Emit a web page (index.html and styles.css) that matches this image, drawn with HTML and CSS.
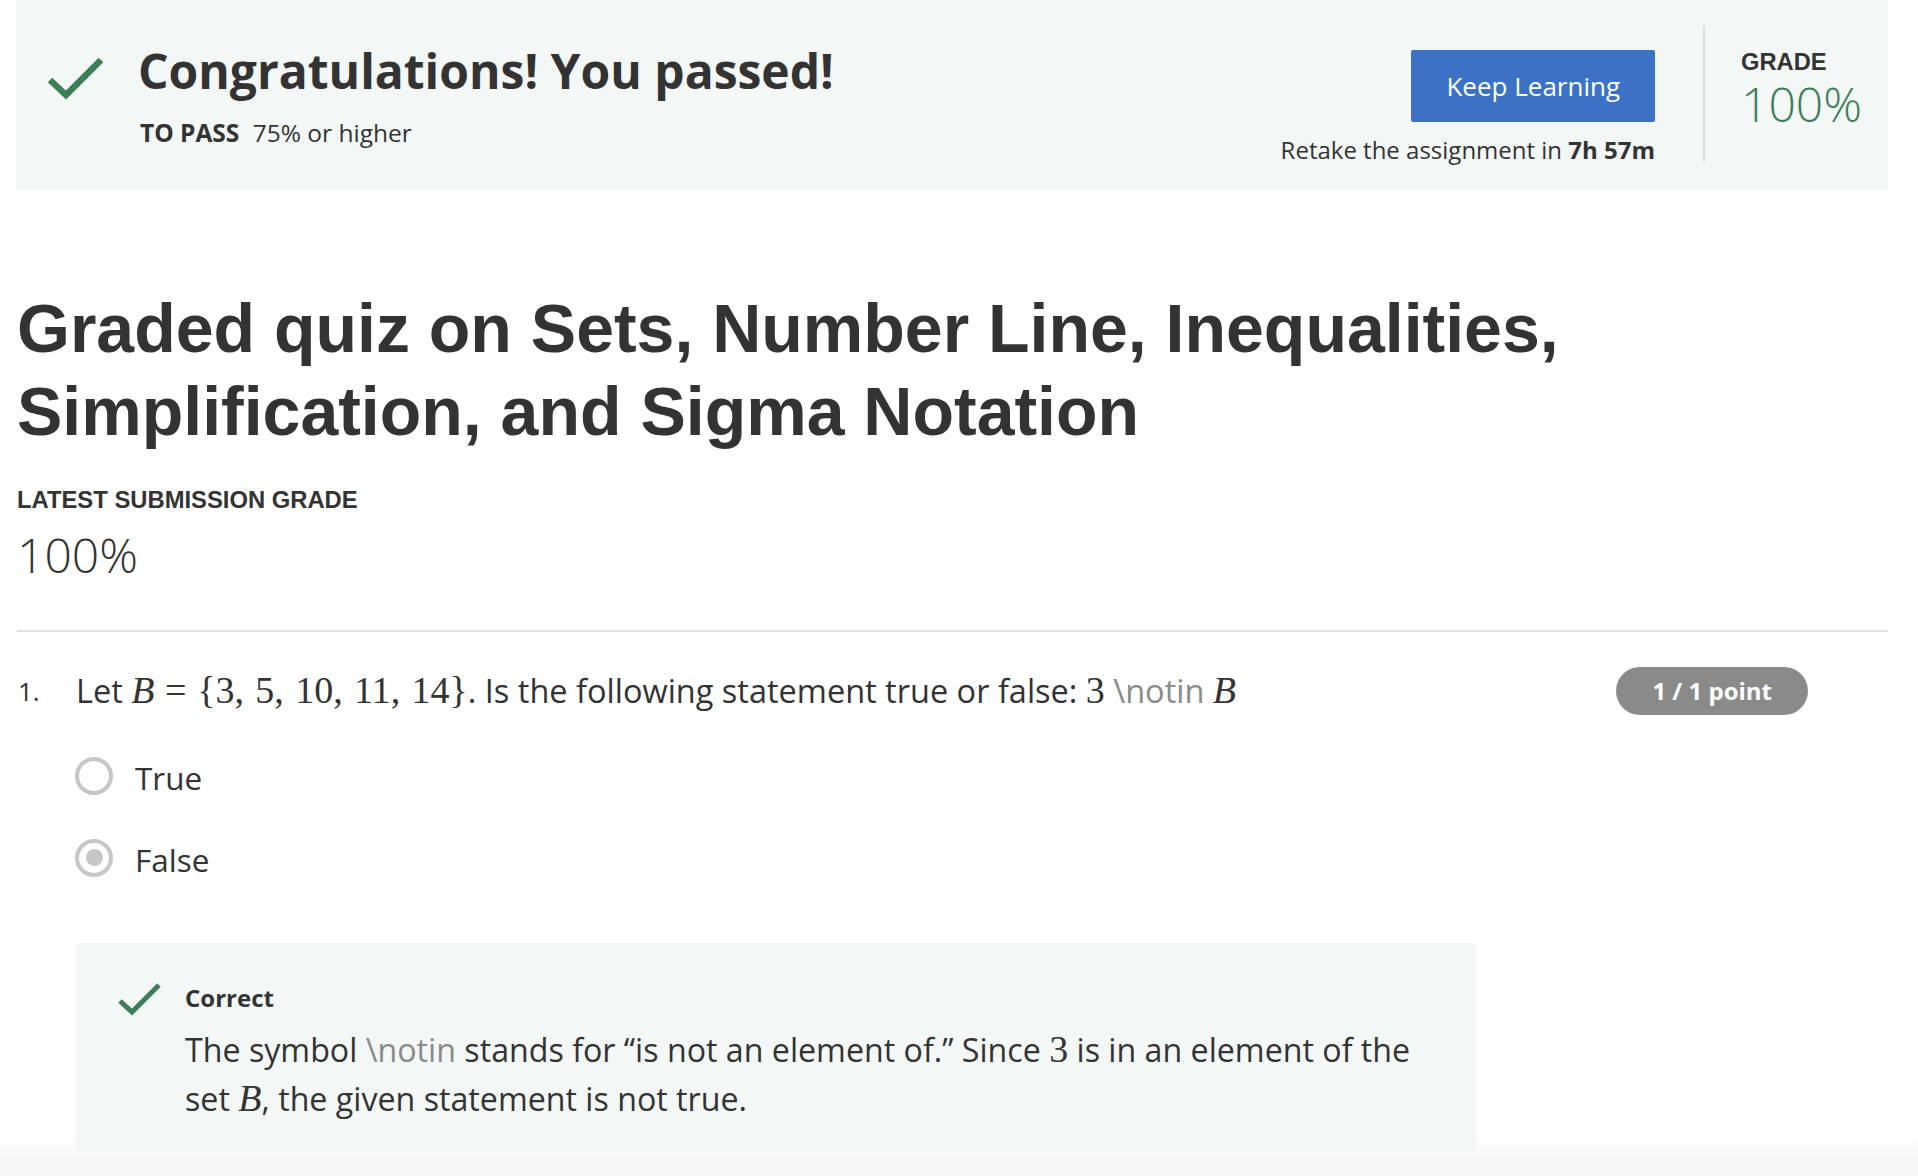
FILE: index.html
```html
<!DOCTYPE html>
<html lang="en">
<head>
<meta charset="utf-8">
<title>Graded quiz</title>
<link rel="stylesheet" href="styles.css">
</head>
<body>
<div class="page">
  <section class="banner">
    <div class="banner-main">
      <svg class="banner-check" width="60" height="44" viewBox="0 0 60 44"><polyline points="4,24 20,39 55,4" fill="none" stroke="#3b7f57" stroke-width="6.5"/></svg>
      <div class="banner-text">
        <div class="banner-title">Congratulations! You passed!</div>
        <div class="banner-pass"><span class="pass-label">TO PASS</span> 75% or higher</div>
      </div>
    </div>
    <div class="banner-spacer"></div>
    <div class="banner-actions">
      <button class="btn-primary">Keep Learning</button>
      <div class="retake">Retake the assignment in <b>7h 57m</b></div>
    </div>
    <div class="banner-divider"></div>
    <div class="banner-grade">
      <div class="grade-label">GRADE</div>
      <div class="grade-value">100%</div>
    </div>
  </section>

  <h1 class="quiz-title">Graded quiz on Sets, Number Line, Inequalities, Simplification, and Sigma Notation</h1>

  <div class="latest-label">LATEST SUBMISSION GRADE</div>
  <div class="latest-value">100%</div>

  <hr class="rule">

  <div class="question">
    <div class="q-head">
      <div class="q-num">1.</div>
      <div class="q-text">Let <span class="math"><i>B</i><span class="rel">=</span>{3,<span class="th"></span>5,<span class="th"></span>10,<span class="th"></span>11,<span class="th"></span>14}</span>. Is the following statement true or false: <span class="math">3</span> <span class="raw">\notin</span> <span class="math"><i>B</i></span></div>
      <div class="q-spacer"></div>
      <div class="pill">1 / 1 point</div>
    </div>
    <div class="q-body">
      <div class="option">
        <span class="radio"></span>
        <span class="opt-label">True</span>
      </div>
      <div class="option">
        <span class="radio checked"></span>
        <span class="opt-label">False</span>
      </div>
      <div class="feedback">
        <svg class="fb-check" width="46" height="34" viewBox="0 0 46 34"><polyline points="3,18 15,29 42,2" fill="none" stroke="#3b7f57" stroke-width="5"/></svg>
        <div class="fb-text">
          <div class="fb-title">Correct</div>
          <p class="fb-body">The symbol <span class="raw">\notin</span> stands for “is not an element of.” Since <span class="math">3</span> is in an element of the set <span class="math"><i>B</i></span>, the given statement is not true.</p>
        </div>
      </div>
    </div>
  </div>
</div>
<div class="bottom-fade"></div>
</body>
</html>
```

FILE: styles.css
```css
* { box-sizing: border-box; }
html, body { margin: 0; padding: 0; background: #ffffff; }
body {
  font-family: "Open Sans", "Liberation Sans", sans-serif;
  color: #333333;
}
.page {
  margin: 0 30px 0 16px;
  padding-bottom: 80px;
}

/* Banner */
.banner {
  display: flex;
  align-items: flex-start;
  height: 189px;
  background: #f3f8f6;
  padding: 0 26px 0 30px;
}
.banner-main {
  display: flex;
  align-items: flex-start;
}
.banner-check {
  margin-top: 56px;
  flex: none;
}
.banner-text {
  margin-left: 32px;
  padding-top: 43px;
}
.banner-title {
  font-weight: 700;
  font-size: 48px;
  line-height: 56px;
  color: #333;
}
.banner-pass {
  margin-top: 19px;
  padding-left: 2px;
  font-size: 24.5px;
  line-height: 30px;
  color: #333;
}
.pass-label {
  font-weight: 700;
  margin-right: 7px;
}
.banner-spacer { flex: 1; }
.banner-actions {
  display: flex;
  flex-direction: column;
  align-items: flex-end;
  padding-top: 50px;
}
.btn-primary {
  height: 72px;
  padding: 0 35px;
  border: none;
  border-radius: 2px;
  background: #3c72c6;
  color: #ffffff;
  font-family: "Open Sans", sans-serif;
  font-size: 26px;
  font-weight: 400;
}
.retake {
  margin-top: 13px;
  font-size: 24px;
  line-height: 30px;
  color: #333;
}
.retake b { font-weight: 700; }
.banner-divider {
  width: 2px;
  height: 136px;
  margin-top: 26px;
  margin-left: 48px;
  background: #dcdfde;
}
.banner-grade {
  margin-left: 36px;
  padding-top: 48px;
}
.grade-label {
  font-family: "Liberation Sans", Arial, sans-serif;
  font-weight: 700;
  font-size: 23.7px;
  line-height: 28px;
  color: #333;
}
.grade-value {
  font-weight: 300;
  font-size: 48px;
  line-height: 55px;
  color: #3b7f57;
}

/* Title */
.quiz-title {
  margin: 98px 0 0 1px;
  font-family: "Liberation Sans", Arial, sans-serif;
  font-weight: 700;
  font-size: 68px;
  line-height: 83px;
  color: #333;
}
.latest-label {
  margin: 32px 0 0 1px;
  font-family: "Liberation Sans", Arial, sans-serif;
  font-weight: 700;
  font-size: 23.8px;
  line-height: 30px;
  color: #333;
}
.latest-value {
  margin: 11px 0 0 1px;
  font-weight: 300;
  font-size: 48px;
  line-height: 57.6px;
  color: #333;
}
.rule {
  margin: 46px 0 0 1px;
  border: none;
  height: 2px;
  background: #e1e1e1;
}

/* Question */
.question { margin-top: 35px; }
.q-head {
  display: flex;
  align-items: center;
  padding-right: 80px;
}
.q-num {
  width: 60px;
  padding-left: 2px;
  font-size: 26px;
  line-height: 40px;
  flex: none;
}
.q-text {
  font-size: 32.5px;
  line-height: 40px;
  white-space: nowrap;
}
.math {
  font-family: "Liberation Serif", "Times New Roman", serif;
  font-size: 38px;
  line-height: 1;
}
.math i { font-style: italic; }
.math .rel { margin: 0 0.28em; }
.math .th { display: inline-block; width: 0.3em; }
.raw { color: #8a8a8a; }
.q-spacer { flex: 1; }
.pill {
  height: 48px;
  padding: 0 36px;
  border-radius: 24px;
  background: #8a8a8a;
  color: #ffffff;
  font-weight: 700;
  font-size: 24px;
  line-height: 48px;
  white-space: nowrap;
}
.q-body {
  margin-left: 60px;
  padding-top: 40px;
}
.option {
  display: flex;
  align-items: flex-start;
  margin-bottom: 36px;
}
.radio {
  width: 38px;
  height: 38px;
  margin-top: 2px;
  border: 4px solid #c6c6c6;
  border-radius: 50%;
  flex: none;
  display: flex;
  align-items: center;
  justify-content: center;
  margin-left: -1px;
}
.radio.checked::after {
  content: "";
  width: 17px;
  height: 17px;
  border-radius: 50%;
  background: #c6c6c6;
}
.opt-label {
  margin-left: 22px;
  font-size: 31.5px;
  line-height: 46px;
}

/* Feedback */
.feedback {
  display: flex;
  align-items: flex-start;
  width: 1400px;
  margin-top: 60px;
  padding: 40px 36px 29px 41px;
  background: #f3f8f6;
}
.fb-check {
  flex: none;
}
.fb-text { margin-left: 22px; }
.fb-title {
  font-weight: 700;
  font-size: 24px;
  line-height: 30px;
}
.fb-body {
  margin: 12px 0 0 0;
  font-size: 32.2px;
  line-height: 49px;
}

.bottom-fade {
  position: fixed;
  left: 0;
  right: 0;
  bottom: 0;
  height: 40px;
  background: linear-gradient(to bottom, rgba(246, 246, 246, 0), #f6f6f6 60%);
  pointer-events: none;
}
```
